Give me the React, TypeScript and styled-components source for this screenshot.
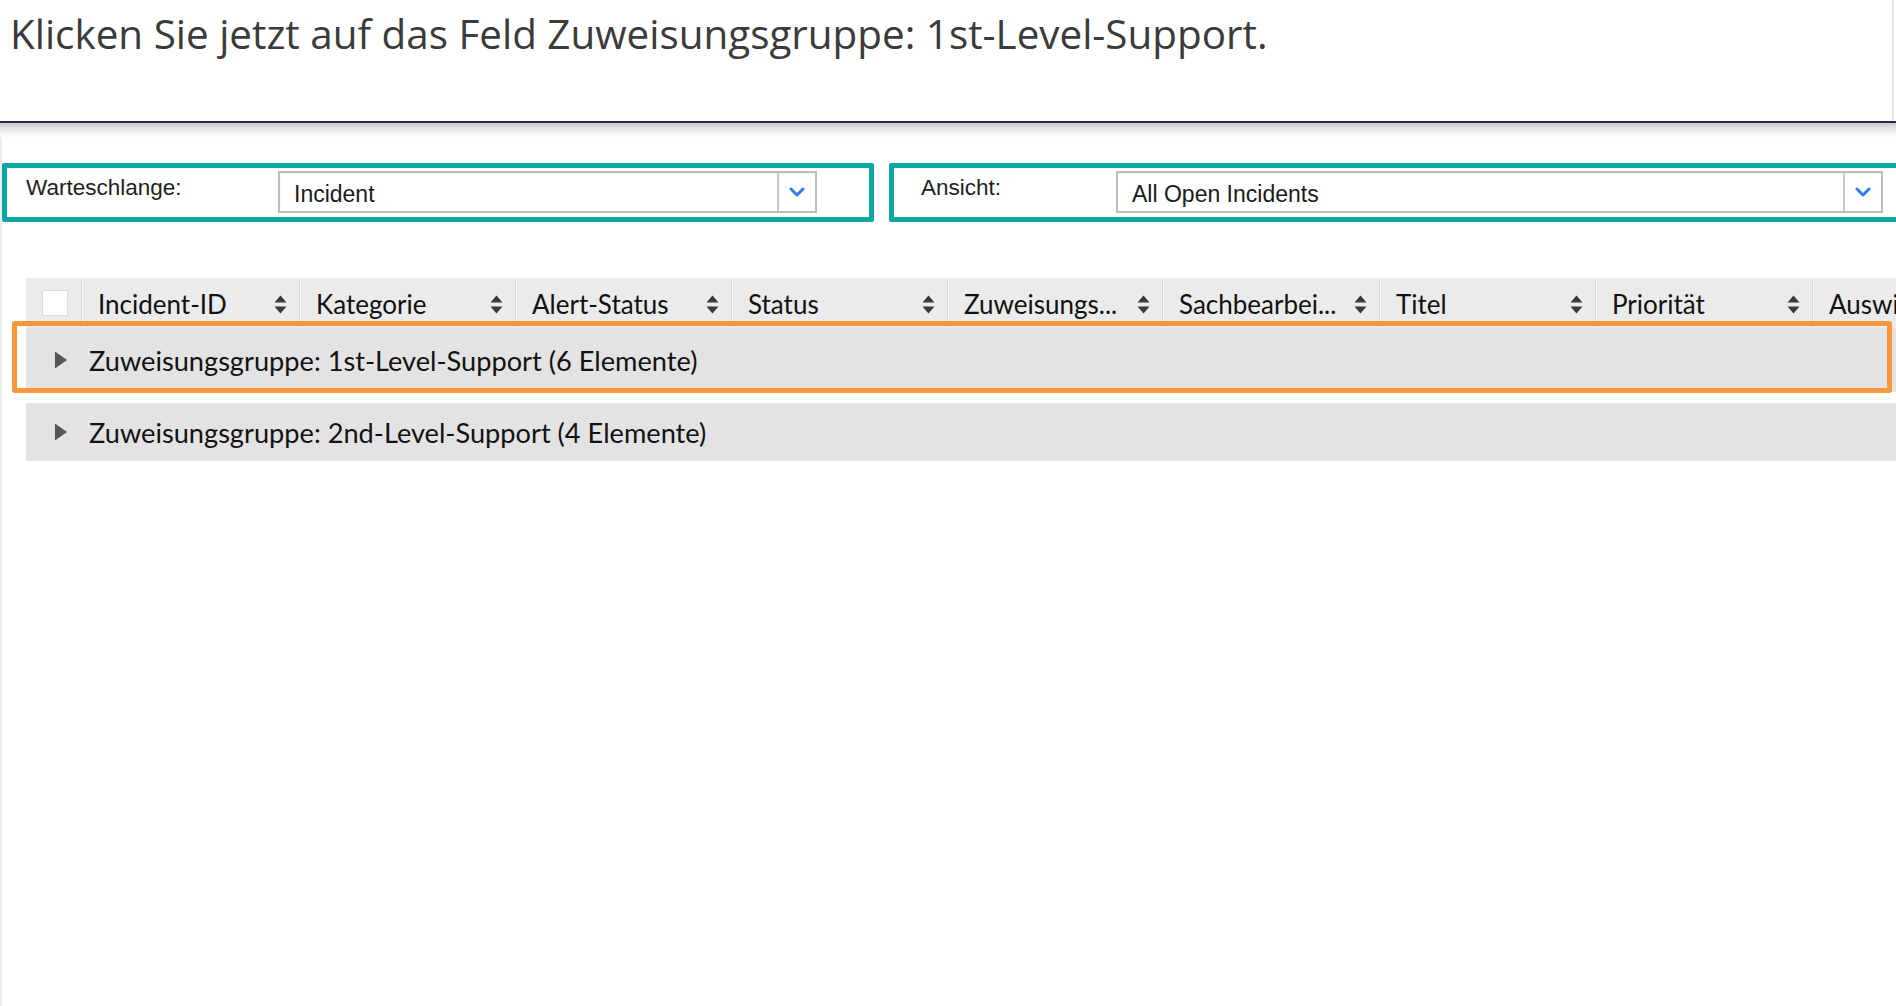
import React from "react";
import styled, { createGlobalStyle } from "styled-components";

const GlobalStyle = createGlobalStyle`
  html, body {
    margin: 0;
    padding: 0;
    background: #ffffff;
    overflow: hidden;
  }
  * { box-sizing: border-box; }
`;

const Page = styled.div`
  width: 1896px;
  height: 1006px;
  overflow: hidden;
  background: #ffffff;
  display: flex;
  flex-direction: column;
`;

const Header = styled.header`
  height: 121px;
  margin-right: 2px;
  border-right: 2px solid #e4e4e4;
  padding: 9px 0 0 10px;
  background: #ffffff;
`;

const Title = styled.h1`
  margin: 0;
  font-family: "Open Sans", "Noto Sans", sans-serif;
  font-weight: 400;
  font-size: 40.4px;
  line-height: 50px;
  color: #3b3b3b;
  letter-spacing: 0;
`;

const Rule = styled.div`
  height: 16px;
  border-top: 2px solid #1e2b50;
  background: linear-gradient(to bottom, #c9c9c9 0%, #e6e6e6 40%, #ffffff 100%);
`;

const Content = styled.main`
  flex: 1;
  border-left: 2px solid #eeeeee;
  display: flex;
  flex-direction: column;
  padding-top: 26px;
`;

const FilterBar = styled.div`
  display: flex;
  gap: 15px;
  width: 2000px;
`;

const FilterBox = styled.section<{ $width: number; $padLeft: number }>`
  width: ${(p) => p.$width}px;
  height: 59px;
  flex: none;
  border: 5px solid #0aa7a3;
  border-radius: 2px;
  display: flex;
  align-items: flex-start;
  padding: 3px 0 0 ${(p) => p.$padLeft}px;
  background: #ffffff;
`;

const FilterLabel = styled.label<{ $width: number }>`
  width: ${(p) => p.$width}px;
  flex: none;
  font-family: "Liberation Sans", Arial, sans-serif;
  font-size: 22.5px;
  line-height: 30px;
  color: #1e1e1e;
  padding-top: 2px;
`;

const Select = styled.div<{ $width: number }>`
  width: ${(p) => p.$width}px;
  height: 42px;
  flex: none;
  display: flex;
  border: 2px solid #bdbdbd;
  background: #ffffff;
  box-shadow: inset 0 1px 2px rgba(0, 0, 0, 0.08);
`;

const SelectValue = styled.div`
  flex: 1;
  display: flex;
  align-items: center;
  padding: 4px 0 0 14px;
  font-family: "Liberation Sans", Arial, sans-serif;
  font-size: 23px;
  color: #1a1a1a;
`;

const SelectButton = styled.div`
  width: 38px;
  flex: none;
  border-left: 2px solid #c8c8c8;
  display: flex;
  align-items: center;
  justify-content: center;
`;

const TableWrap = styled.div`
  position: relative;
  margin: 56px 0 0 24px;
  width: 2000px;
`;

const HeaderRow = styled.div`
  height: 50px;
  display: flex;
  background: #ebebeb;
`;

const CheckCell = styled.div`
  width: 56px;
  flex: none;
  display: flex;
  align-items: center;
  padding: 0 0 0 16px;
  border-right: 1px solid #d9d9d9;
`;

const Checkbox = styled.span`
  width: 26px;
  height: 26px;
  background: #ffffff;
  border: 1px solid #dcdcdc;
`;

const HeadCell = styled.div<{ $width: number }>`
  width: ${(p) => p.$width}px;
  flex: none;
  display: flex;
  align-items: center;
  justify-content: space-between;
  padding: 2px 12px 0 16px;
  border-right: 1px solid #d9d9d9;
  box-shadow: inset 1px 0 0 #f6f6f6;
  font-family: Lato, "Open Sans", sans-serif;
  font-size: 26px;
  color: #111111;
  white-space: nowrap;
  overflow: hidden;
`;

const GroupRow = styled.div<{ $height: number; $gap: number }>`
  height: ${(p) => p.$height}px;
  margin-top: ${(p) => p.$gap}px;
  display: flex;
  align-items: center;
  gap: 21px;
  padding-left: 28px;
  background: #e3e3e3;
  font-family: Lato, "Open Sans", sans-serif;
  font-size: 27.2px;
  color: #121212;
`;

const Highlight = styled.div`
  position: absolute;
  left: -14px;
  top: 43px;
  width: 1880px;
  height: 72px;
  border: 5px solid #f7993a;
  border-radius: 3px;
  pointer-events: none;
`;

const Chevron = () => (
  <svg width="16" height="10" viewBox="0 0 16 10">
    <path d="M2 2 L8 8 L14 2" fill="none" stroke="#2f7fe6" strokeWidth="3" strokeLinecap="round" strokeLinejoin="round" />
  </svg>
);

const SortIcon = () => (
  <svg width="13" height="19" viewBox="0 0 13 19">
    <path d="M6.5 0.5 L12.5 7.5 L0.5 7.5 Z" fill="#3a3a3a" />
    <path d="M6.5 18.5 L12.5 11.5 L0.5 11.5 Z" fill="#3a3a3a" />
  </svg>
);

const Caret = () => (
  <svg width="14" height="18" viewBox="0 0 14 18">
    <path d="M1 0.5 L13 9 L1 17.5 Z" fill="#555555" />
  </svg>
);

const columns = [
  { label: "Incident-ID", w: 218 },
  { label: "Kategorie", w: 216 },
  { label: "Alert-Status", w: 216 },
  { label: "Status", w: 216 },
  { label: "Zuweisungs...", w: 215 },
  { label: "Sachbearbei...", w: 217 },
  { label: "Titel", w: 216 },
  { label: "Priorität", w: 217 },
  { label: "Auswirkung", w: 216 },
];

export default function App() {
  return (
    <>
      <GlobalStyle />
      <Page>
        <Header>
          <Title>Klicken Sie jetzt auf das Feld Zuweisungsgruppe: 1st-Level-Support.</Title>
        </Header>
        <Rule />
        <Content>
          <FilterBar>
            <FilterBox $width={872} $padLeft={19}>
              <FilterLabel $width={252}>Warteschlange:</FilterLabel>
              <Select $width={539}>
                <SelectValue>Incident</SelectValue>
                <SelectButton>
                  <Chevron />
                </SelectButton>
              </Select>
            </FilterBox>
            <FilterBox $width={1040} $padLeft={27}>
              <FilterLabel $width={195}>Ansicht:</FilterLabel>
              <Select $width={767}>
                <SelectValue>All Open Incidents</SelectValue>
                <SelectButton>
                  <Chevron />
                </SelectButton>
              </Select>
            </FilterBox>
          </FilterBar>
          <TableWrap>
            <HeaderRow>
              <CheckCell>
                <Checkbox />
              </CheckCell>
              {columns.map((c) => (
                <HeadCell key={c.label} $width={c.w}>
                  <span>{c.label}</span>
                  <SortIcon />
                </HeadCell>
              ))}
            </HeaderRow>
            <GroupRow $height={64} $gap={0}>
              <Caret />
              <span>Zuweisungsgruppe: 1st-Level-Support (6 Elemente)</span>
            </GroupRow>
            <GroupRow $height={58} $gap={11}>
              <Caret />
              <span>Zuweisungsgruppe: 2nd-Level-Support (4 Elemente)</span>
            </GroupRow>
            <Highlight />
          </TableWrap>
        </Content>
      </Page>
    </>
  );
}
